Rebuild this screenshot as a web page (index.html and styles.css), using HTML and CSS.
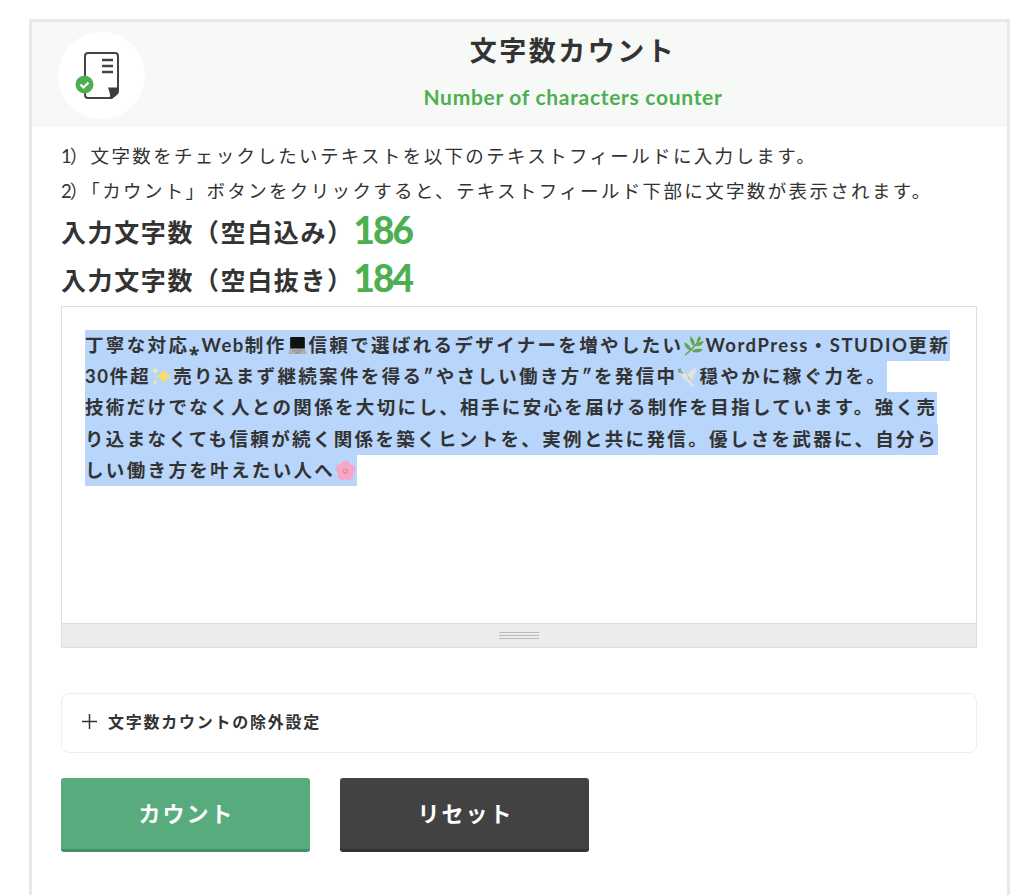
FILE: index.html
```html
<!DOCTYPE html>
<html lang="ja">
    <head>
        <meta charset="UTF-8">
        <meta name="viewport" content="width=device-width, initial-scale=1.0">
        <title>文字数カウント</title>
        <link rel="stylesheet" href="styles.css">
    </head>
    <body>
        <div class="card">
            <div class="card-head">
                <div class="head-icon">
                    <svg class="doc-icon" viewBox="0 0 87 87">
                        <path d="M27 44V24q0-3 3-3h27q3 0 3 3v32q0 2-1.500 3.500L52 66H30q-3 0-3-3v-2" fill="none" stroke="#444" stroke-width="2"/>
                        <path d="M50 55.500h11V59q0 2-1.500 3.500L54 67h-1.500q-.5-7-2.500-11.500z" fill="#3d3d3d"/>
                        <path d="M44 28h11M44 34h11M44 40h11" stroke="#444" stroke-width="2.400"/>
                        <circle cx="26.500" cy="52.500" r="9" fill="#4caf50"/>
                        <path d="M22.500 52.500l3 3 5-5" fill="none" stroke="#fff" stroke-width="2"/>
                    </svg>
                </div>
                <div class="head-text">
                    <h1 class="title">文字数カウント</h1>
                    <p class="subtitle">Number of characters counter</p>
                </div>
            </div>

            <div class="card-body">
                <p class="step"><span class="no">1</span>）文字数をチェックしたいテキストを以下のテキストフィールドに入力します。</p>
                <p class="step"><span class="no">2</span>）「カウント」ボタンをクリックすると、テキストフィールド下部に文字数が表示されます。</p>
                <p class="count"><span>入力文字数（空白込み）</span><span class="num">186</span></p>
                <p class="count"><span>入力文字数（空白抜き）</span><span class="num">184</span></p>

                <div class="field">
                    <div class="field-text">
                        <div class="sel">丁寧な対応⁎<span class="latin">Web</span>制作<svg class="emoji" viewBox="0 0 20 20"><path d="M3 3q0-1 1-1h12q1 0 1 1v10H3z" fill="#111"/><path d="M3 13h14l2 5H1z" fill="#b0b0b0"/><path d="M5 15h10M8 17h4" stroke="#8a8a8a"/></svg>信頼で選ばれるデザイナーを増やしたい<svg class="emoji" viewBox="0 0 20 20"><path d="M2 19Q9 14 17 3" fill="none" stroke="#5c9a45" stroke-width="1.200"/><path d="M8 15Q2 14 1 7q6 2 7 8zM11 11Q6 8 7 1q5 4 4 10zM8 15q6-3 11-1-5 5-11 1zM12 10q3-4 8-4-3 6-8 4zM13 7q0-4 3-6 2 3-3 6z" fill="#63a64c"/></svg><span class="latin">WordPress</span>・<span class="latin">STUDIO</span>更新</div>
                        <div class="sel"><span class="latin">30</span>件超<svg class="emoji" viewBox="0 0 20 20"><path d="M12 2q1 7 8 8-7 1-8 8-1-7-8-8 7-1 8-8z" fill="#fbdc6a"/><path d="M4 1q.5 3 3 3.500-2.500.5-3 3-.5-2.500-3-3 2.500-.5 3-3.500zM4 13q.4 2 2 2.500-1.600.5-2 2.500-.4-2-2-2.500 1.600-.5 2-2.500z" fill="#fce9a6"/></svg>売り込まず継続案件を得る″やさしい働き方″を発信中<svg class="emoji" viewBox="0 0 20 20"><path d="M19 1Q12 4 10 9 8 6 5 6 4 13 9 14l5 6 2-1-3-5q4-4 6-13z" fill="#e2e2de"/><path d="M10 9q1 3 3 5" stroke="#b5b5b0" fill="none"/><path d="M6 7Q3 6 1 3M3 5L1 6M3 5l0-3" stroke="#6f9e58" fill="none"/></svg>穏やかに稼ぐ力を。</div>
                        <div class="sel">技術だけでなく人との関係を大切にし、相手に安心を届ける制作を目指しています。強く売</div>
                        <div class="sel">り込まなくても信頼が続く関係を築くヒントを、実例と共に発信。優しさを武器に、自分ら</div>
                        <div class="sel">しい働き方を叶えたい人へ<svg class="emoji" viewBox="0 0 20 20"><g fill="#f5a9c8"><circle cx="10" cy="5" r="4.500"/><circle cx="15" cy="8.500" r="4.500"/><circle cx="13" cy="15" r="4.500"/><circle cx="7" cy="15" r="4.500"/><circle cx="5" cy="8.500" r="4.500"/></g><circle cx="10" cy="10.500" r="2.500" fill="#ee7fae"/><circle cx="10" cy="10.500" r="1.200" fill="#f4d03f"/></svg></div>
                    </div>
                    <div class="field-grip"><span class="grip"></span></div>
                </div>

                <div class="exclude">
                    <svg class="plus" viewBox="0 0 15 15"><path d="M7.500 0v15M0 7.500h15" stroke="#333" stroke-width="1.500"/></svg>
                    <span>文字数カウントの除外設定</span>
                </div>

                <div class="btns">
                    <button class="btn btn-count">カウント</button>
                    <button class="btn btn-reset">リセット</button>
                </div>
            </div>
        </div>
    </body>
</html>
```

FILE: styles.css
```css
html, body {
    height: 100%;
    overflow: hidden;
}
body {
    margin: 0;
    padding-top: 19px;
    box-sizing: border-box;
    background-color: #fff;
    color: #333;
    font-family: Lato, "Noto Sans CJK JP", sans-serif;
}
p, h1 {
    margin: 0;
}
.card {
    width: 981px;
    min-height: 900px;
    margin-left: 29px;
    box-sizing: border-box;
    border: 3px solid #e8e8e8;
    border-bottom: none;
}
.card-head {
    display: flex;
    height: 105px;
    padding: 10px 6px 0 26px;
    box-sizing: border-box;
    background-color: #f7f9f7;
}
.head-icon {
    width: 87px;
    height: 87px;
    border-radius: 50%;
    background-color: #fff;
}
.doc-icon {
    display: block;
    width: 87px;
    height: 87px;
}
.head-text {
    flex: 1;
    text-align: center;
}
.title {
    font-size: 27px;
    line-height: 38px;
    letter-spacing: 2.500px;
    font-weight: 700;
    color: #333;
}
.subtitle {
    margin-top: 11px;
    font-size: 21px;
    line-height: 32px;
    font-weight: 700;
    letter-spacing: 0.700px;
    color: #4caf50;
}
.card-body {
    padding: 12px 30px 0 29px;
}
.step {
    font-size: 18.500px;
    line-height: 35px;
    letter-spacing: 2.350px;
    color: #333;
}
.no {
    letter-spacing: -2px;
}
.step + .count {
    margin-top: -2px;
}
.count {
    display: flex;
    align-items: center;
    height: 48px;
    font-size: 25px;
    font-weight: 700;
    letter-spacing: 1.600px;
}
.num {
    padding-bottom: 4px;
    font-size: 37px;
    font-weight: 900;
    letter-spacing: -2px;
    color: #4caf50;
}
.field {
    margin-top: 3px;
    border: 1px solid #ddd;
    height: 342px;
    box-sizing: border-box;
    display: flex;
    flex-direction: column;
}
.field-text {
    flex: 1;
    padding: 23px 23px 0;
    font-size: 18.500px;
    font-weight: 700;
    letter-spacing: 2.350px;
    color: #333;
}
.sel {
    width: fit-content;
    height: 31.200px;
    line-height: 31.200px;
    white-space: nowrap;
    background-color: #b8d5fb;
}
.latin {
    letter-spacing: 1.500px;
}
.emoji {
    width: 21px;
    height: 21px;
    margin-right: 1px;
    vertical-align: -4px;
}
.field-grip {
    height: 23px;
    display: flex;
    align-items: center;
    justify-content: center;
    background-color: #ececec;
    border-top: 1px solid #ddd;
}
.grip {
    width: 40px;
    height: 7px;
    border-top: 1px solid #bbb;
    border-bottom: 1px solid #bbb;
    background: linear-gradient(#bbb, #bbb) center / 100% 1px no-repeat;
    box-sizing: border-box;
}
.exclude {
    display: flex;
    align-items: center;
    gap: 11px;
    height: 60px;
    margin-top: 45px;
    padding: 0 0 4px 20px;
    box-sizing: border-box;
    border: 1px solid #eee;
    border-radius: 8px;
    font-size: 16px;
    font-weight: 700;
    letter-spacing: 1.750px;
}
.plus {
    width: 15px;
    height: 15px;
}
.btns {
    display: flex;
    gap: 30px;
    margin-top: 25px;
}
.btn {
    width: 249px;
    height: 74px;
    padding: 0 0 3px 2px;
    border: none;
    border-radius: 3px;
    font-family: inherit;
    font-size: 22px;
    font-weight: 700;
    letter-spacing: 2px;
    color: #fff;
    cursor: pointer;
}
.btn-count {
    background-color: #57ab7c;
    border-bottom: 3px solid #468f66;
}
.btn-reset {
    background-color: #424242;
    border-bottom: 3px solid #333;
}
```
